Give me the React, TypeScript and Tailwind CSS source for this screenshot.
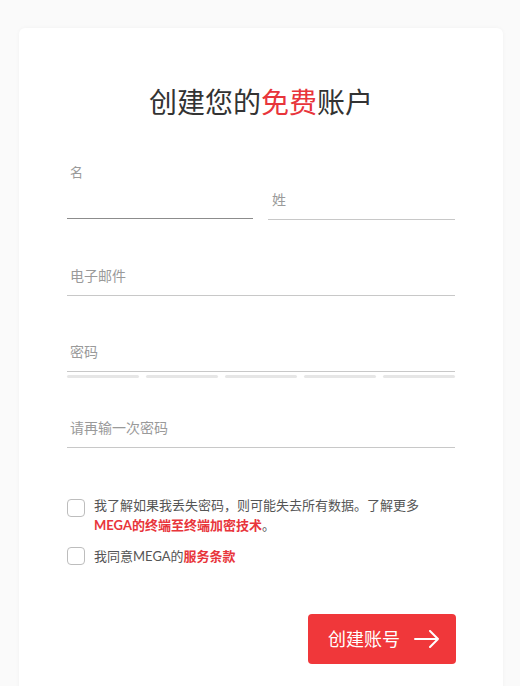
import React from 'react';

const FONT = "font-['Lato','Noto_Sans_CJK_SC',sans-serif]";

function Field({ placeholder, className = '' }: { placeholder: string; className?: string }) {
    return (
        <div className={`h-[41px] border-b border-[#c8c8c8] flex items-center px-[3px] text-[14px] text-[#9a9a9a] ${className}`}>
            {placeholder}
        </div>
    );
}

function Checkbox() {
    return <div className="w-[18px] h-[18px] shrink-0 rounded-[4px] border border-[#bdbdbd] bg-white" />;
}

export default function App() {
    return (
        <div className={`h-[686px] bg-[#fafafa] pt-[28px] overflow-hidden ${FONT}`}>
            <div className="ml-[19px] w-[484px] min-h-[700px] bg-white rounded-[6px] shadow-[0_0_4px_rgba(0,0,0,0.04)] px-[48px] pt-[56px]">
                {/* Title */}
                <h1 className="text-center text-[28px] leading-[36px] text-[#333] font-normal">
                    创建您的<span className="text-[#e8353b]">免费</span>账户
                </h1>

                {/* Name */}
                <div className="mt-[59px] flex gap-[15px]">
                    <div className="relative w-[186px] h-[40px] border-b border-[#8c8c8c]">
                        <span className="absolute left-[3px] -top-[15px] text-[13px] leading-[16px] text-[#9a9a9a]">名</span>
                    </div>
                    <Field placeholder="姓" className="w-[187px] px-[4px]" />
                </div>

                <Field placeholder="电子邮件" className="mt-[35px]" />
                <Field placeholder="密码" className="mt-[35px]" />

                {/* Strength bars */}
                <div className="mt-[3px] grid grid-cols-5 gap-[7px]">
                    <div className="h-[3px] bg-[#e6e6e6] rounded-full" />
                    <div className="h-[3px] bg-[#e6e6e6] rounded-full" />
                    <div className="h-[3px] bg-[#e6e6e6] rounded-full" />
                    <div className="h-[3px] bg-[#e6e6e6] rounded-full" />
                    <div className="h-[3px] bg-[#e6e6e6] rounded-full" />
                </div>

                <Field placeholder="请再输一次密码" className="mt-[29px]" />

                {/* Checkboxes */}
                <div className="mt-[47px] flex gap-[9px] text-[13px] leading-[20px] text-[#555]">
                    <div className="pt-[4px]"><Checkbox /></div>
                    <p>
                        我了解如果我丢失密码，则可能失去所有数据。了解更多
                        <br />
                        <span className="text-[#e8353b] font-bold">MEGA的终端至终端加密技术</span>。
                    </p>
                </div>
                <div className="mt-[11px] flex items-center gap-[9px] text-[13px] leading-[20px] text-[#555]">
                    <Checkbox />
                    <p>
                        我同意MEGA的<span className="text-[#e8353b] font-bold">服务条款</span>
                    </p>
                </div>

                {/* Submit */}
                <div className="mt-[48px] flex justify-end">
                    <button className="w-[148px] h-[50px] rounded-[4px] bg-[#f0373a] text-white text-[18px] flex items-center pl-[20px] gap-[14px] mr-[-1px]">
                        <span>创建账号</span>
                        <svg width="26" height="18" viewBox="0 0 26 18" fill="none" stroke="currentColor" strokeWidth="2" strokeLinecap="round" strokeLinejoin="round">
                            <path d="M1 9h23M16 1l8 8-8 8" />
                        </svg>
                    </button>
                </div>
            </div>
        </div>
    );
}
